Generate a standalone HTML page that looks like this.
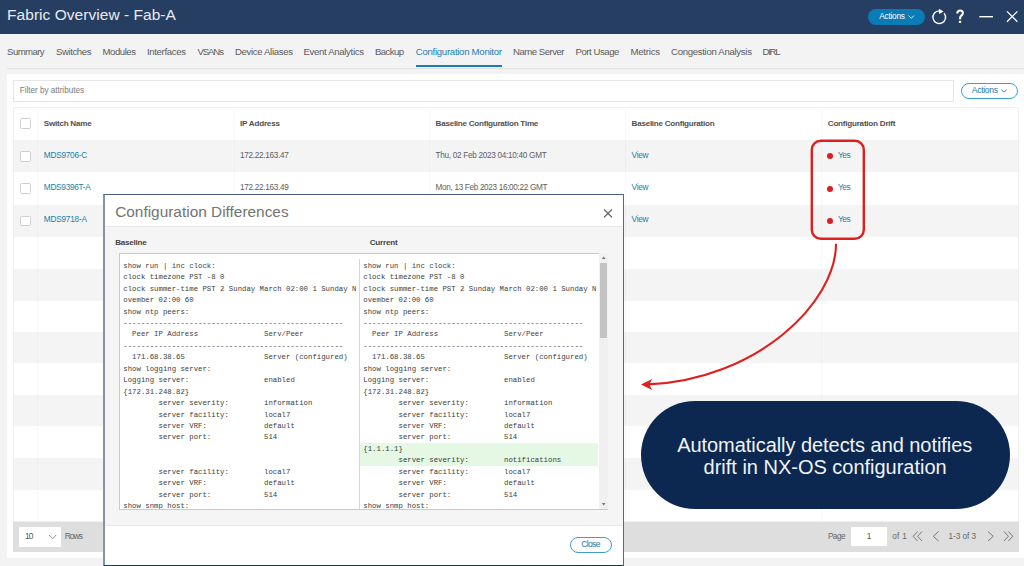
<!DOCTYPE html>
<html><head><meta charset="utf-8"><style>
html,body{margin:0;padding:0;width:1024px;height:566px;overflow:hidden;background:#f3f3f3;}
body{position:relative;font-family:"Liberation Sans", sans-serif;}
.a{position:absolute;}
.t{position:absolute;white-space:pre;}
</style></head><body>
<div class="a" style="left:0px;top:0px;width:1024.00px;height:33.50px;background:#263e62"></div>
<div class="t" style="left:7.05px;top:5.00px;font-size:15.5px;line-height:19px;color:#e6eaf0;letter-spacing:0.040px;">Fabric Overview - Fab-A</div>
<div class="a" style="left:867.75px;top:8.8px;width:57.45px;height:16.00px;background:#0a7bb5;border-radius:8px"></div>
<div class="t" style="left:879.30px;top:11.00px;font-size:8.3px;line-height:10px;color:#ffffff;letter-spacing:-0.254px;">Actions</div>
<svg class="a" style="left:0;top:0" width="1024" height="566" viewBox="0 0 1024 566"><path d="M908.6 15.6 L911.3 18.3 L914 15.6" fill="none" stroke="#fff" stroke-width="0.9"/><path d="M939.3 10.9 A6.3 6.3 0 1 0 944.1 13.2" fill="none" stroke="#fff" stroke-width="1.4"/><path d="M938.9 8.7 L943.5 11.4 L939.1 14.1 Z" fill="#fff"/><path d="M957.3 13.6 C957.3 11.5 958.6 10.5 960.1 10.5 C961.8 10.5 962.9 11.6 962.9 13.1 C962.9 14.7 961.7 15.3 960.9 16 C960.2 16.6 960.1 17.2 960.1 18.4 V19.3" fill="none" stroke="#fff" stroke-width="2.1"/><rect x="958.9" y="20.8" width="2.3" height="2.1" fill="#fff"/><path d="M979.3 16.7 H993" stroke="#fff" stroke-width="1.4"/><path d="M1007 11.4 L1017.4 21.7 M1017.4 11.4 L1007 21.7" stroke="#fff" stroke-width="1.3"/></svg>
<div class="a" style="left:0px;top:33.5px;width:1024.00px;height:40.50px;background:#f3f3f3"></div>
<div class="t" style="left:7.10px;top:46.00px;font-size:9.6px;line-height:12px;color:#5a5a5a;letter-spacing:-0.598px;">Summary</div>
<div class="t" style="left:55.90px;top:46.00px;font-size:9.6px;line-height:12px;color:#5a5a5a;letter-spacing:-0.400px;">Switches</div>
<div class="t" style="left:102.50px;top:46.00px;font-size:9.6px;line-height:12px;color:#5a5a5a;letter-spacing:-0.465px;">Modules</div>
<div class="t" style="left:147.00px;top:46.00px;font-size:9.6px;line-height:12px;color:#5a5a5a;letter-spacing:-0.349px;">Interfaces</div>
<div class="t" style="left:197.50px;top:46.00px;font-size:9.6px;line-height:12px;color:#5a5a5a;letter-spacing:-1.115px;">VSANs</div>
<div class="t" style="left:235.00px;top:46.00px;font-size:9.6px;line-height:12px;color:#5a5a5a;letter-spacing:-0.342px;">Device Aliases</div>
<div class="t" style="left:303.50px;top:46.00px;font-size:9.6px;line-height:12px;color:#5a5a5a;letter-spacing:-0.328px;">Event Analytics</div>
<div class="t" style="left:375.00px;top:46.00px;font-size:9.6px;line-height:12px;color:#5a5a5a;letter-spacing:-0.603px;">Backup</div>
<div class="t" style="left:415.80px;top:46.00px;font-size:9.6px;line-height:12px;color:#1b80b3;letter-spacing:-0.279px;">Configuration Monitor</div>
<div class="t" style="left:513.00px;top:46.00px;font-size:9.6px;line-height:12px;color:#5a5a5a;letter-spacing:-0.504px;">Name Server</div>
<div class="t" style="left:575.50px;top:46.00px;font-size:9.6px;line-height:12px;color:#5a5a5a;letter-spacing:-0.450px;">Port Usage</div>
<div class="t" style="left:630.50px;top:46.00px;font-size:9.6px;line-height:12px;color:#5a5a5a;letter-spacing:-0.235px;">Metrics</div>
<div class="t" style="left:671.00px;top:46.00px;font-size:9.6px;line-height:12px;color:#5a5a5a;letter-spacing:-0.303px;">Congestion Analysis</div>
<div class="t" style="left:762.50px;top:46.00px;font-size:9.6px;line-height:12px;color:#5a5a5a;letter-spacing:-1.296px;">DIRL</div>
<div class="a" style="left:415.5px;top:65.2px;width:86.80px;height:2.00px;background:#1b7db5"></div>
<div class="a" style="left:7px;top:68px;width:1017.00px;height:1.00px;background:#e2e2e2"></div>
<div class="a" style="left:7px;top:74px;width:1017.00px;height:484.00px;background:#ffffff"></div>
<div class="a" style="left:13px;top:80px;width:941.00px;height:22.00px;border:1px solid #e6e6e6;box-sizing:border-box;background:#fff"></div>
<div class="t" style="left:19.70px;top:86.00px;font-size:8.2px;line-height:10px;color:#7a7a7a;letter-spacing:-0.039px;">Filter by attributes</div>
<div class="a" style="left:961px;top:83.3px;width:56.80px;height:15.30px;border:1px solid #3d9fcf;border-radius:8px;box-sizing:border-box"></div>
<div class="t" style="left:971.80px;top:85.00px;font-size:8.6px;line-height:10px;color:#1b78ad;letter-spacing:-0.335px;">Actions</div>
<svg class="a" style="left:0;top:0" width="1024" height="566"><path d="M1001.3 89.6 L1004 92.2 L1006.7 89.6" fill="none" stroke="#1b78ad" stroke-width="0.9"/></svg>
<div class="a" style="left:13px;top:107px;width:1006.00px;height:415.00px;border:1px solid #efefef;box-sizing:border-box;background:#fff"></div>
<div class="a" style="left:14px;top:140px;width:1004.00px;height:32.00px;background:#f4f4f4"></div>
<div class="a" style="left:14px;top:204.6px;width:1004.00px;height:32.30px;background:#f4f4f4"></div>
<div class="a" style="left:14px;top:268.9px;width:1004.00px;height:31.80px;background:#f4f4f4"></div>
<div class="a" style="left:14px;top:332px;width:1004.00px;height:31.30px;background:#f4f4f4"></div>
<div class="a" style="left:14px;top:394.8px;width:1004.00px;height:31.70px;background:#f4f4f4"></div>
<div class="a" style="left:14px;top:458.2px;width:1004.00px;height:31.90px;background:#f4f4f4"></div>
<div class="a" style="left:37px;top:108.5px;width:1.00px;height:413.40px;background:rgba(0,0,0,0.022)"></div>
<div class="a" style="left:234px;top:108.5px;width:1.00px;height:413.40px;background:rgba(0,0,0,0.022)"></div>
<div class="a" style="left:429px;top:108.5px;width:1.00px;height:413.40px;background:rgba(0,0,0,0.022)"></div>
<div class="a" style="left:625px;top:108.5px;width:1.00px;height:413.40px;background:rgba(0,0,0,0.022)"></div>
<div class="a" style="left:821px;top:108.5px;width:1.00px;height:413.40px;background:rgba(0,0,0,0.022)"></div>
<div class="a" style="left:20.2px;top:117.8px;width:11.20px;height:10.80px;border:1px solid #cfcfcf;border-radius:1.5px;box-sizing:border-box;background:#fff"></div>
<div class="a" style="left:20.2px;top:151.0px;width:11.20px;height:10.80px;border:1px solid #cfcfcf;border-radius:1.5px;box-sizing:border-box;background:#fff"></div>
<div class="a" style="left:20.2px;top:183.4px;width:11.20px;height:10.80px;border:1px solid #cfcfcf;border-radius:1.5px;box-sizing:border-box;background:#fff"></div>
<div class="a" style="left:20.2px;top:215.6px;width:11.20px;height:10.80px;border:1px solid #cfcfcf;border-radius:1.5px;box-sizing:border-box;background:#fff"></div>
<div class="t" style="left:43.80px;top:119.00px;font-size:8.1px;line-height:10px;color:#505050;font-weight:bold;letter-spacing:-0.252px;">Switch Name</div>
<div class="t" style="left:240.00px;top:119.00px;font-size:8.1px;line-height:10px;color:#505050;font-weight:bold;letter-spacing:-0.209px;">IP Address</div>
<div class="t" style="left:435.60px;top:119.00px;font-size:8.1px;line-height:10px;color:#505050;font-weight:bold;letter-spacing:-0.264px;">Baseline Configuration Time</div>
<div class="t" style="left:631.60px;top:119.00px;font-size:8.1px;line-height:10px;color:#505050;font-weight:bold;letter-spacing:-0.264px;">Baseline Configuration</div>
<div class="t" style="left:827.80px;top:119.00px;font-size:8.1px;line-height:10px;color:#505050;font-weight:bold;letter-spacing:-0.237px;">Configuration Drift</div>
<div class="t" style="left:43.80px;top:150.00px;font-size:8.3px;line-height:10px;color:#217fa4;letter-spacing:-0.281px;">MDS9706-C</div>
<div class="t" style="left:240.00px;top:151.00px;font-size:8.2px;line-height:10px;color:#606060;letter-spacing:-0.287px;">172.22.163.47</div>
<div class="t" style="left:435.60px;top:151.00px;font-size:8.2px;line-height:10px;color:#606060;letter-spacing:-0.290px;">Thu, 02 Feb 2023 04:10:40 GMT</div>
<div class="t" style="left:631.60px;top:150.00px;font-size:8.3px;line-height:10px;color:#217fa4;letter-spacing:-0.348px;">View</div>
<div class="a" style="left:827.1px;top:153.40px;width:5.8px;height:5.8px;border-radius:50%;background:#e01e1e"></div>
<div class="t" style="left:838.00px;top:150.00px;font-size:8.3px;line-height:10px;color:#217fa4;letter-spacing:-0.415px;">Yes</div>
<div class="t" style="left:43.80px;top:182.00px;font-size:8.3px;line-height:10px;color:#217fa4;letter-spacing:-0.305px;">MDS9396T-A</div>
<div class="t" style="left:240.00px;top:183.00px;font-size:8.2px;line-height:10px;color:#606060;letter-spacing:-0.287px;">172.22.163.49</div>
<div class="t" style="left:435.60px;top:183.00px;font-size:8.2px;line-height:10px;color:#606060;letter-spacing:-0.330px;">Mon, 13 Feb 2023 16:00:22 GMT</div>
<div class="t" style="left:631.60px;top:182.00px;font-size:8.3px;line-height:10px;color:#217fa4;letter-spacing:-0.348px;">View</div>
<div class="a" style="left:827.1px;top:185.90px;width:5.8px;height:5.8px;border-radius:50%;background:#e01e1e"></div>
<div class="t" style="left:838.00px;top:182.00px;font-size:8.3px;line-height:10px;color:#217fa4;letter-spacing:-0.415px;">Yes</div>
<div class="t" style="left:43.80px;top:214.00px;font-size:8.3px;line-height:10px;color:#217fa4;letter-spacing:-0.254px;">MDS9718-A</div>
<div class="t" style="left:631.60px;top:214.00px;font-size:8.3px;line-height:10px;color:#217fa4;letter-spacing:-0.348px;">View</div>
<div class="a" style="left:827.1px;top:218.10px;width:5.8px;height:5.8px;border-radius:50%;background:#e01e1e"></div>
<div class="t" style="left:838.00px;top:214.00px;font-size:8.3px;line-height:10px;color:#217fa4;letter-spacing:-0.415px;">Yes</div>
<div class="a" style="left:13px;top:522px;width:1006.00px;height:30.40px;background:#dedede"></div>
<div class="a" style="left:19px;top:526.9px;width:42.30px;height:20.10px;background:#fff"></div>
<div class="t" style="left:25.10px;top:531.00px;font-size:8.5px;line-height:10px;color:#555;letter-spacing:-1.135px;">10</div>
<svg class="a" style="left:0;top:0" width="1024" height="566"><path d="M49 535 L52.6 538.6 L56.2 535" fill="none" stroke="#888" stroke-width="0.9"/></svg>
<div class="t" style="left:64.70px;top:531.00px;font-size:8.5px;line-height:10px;color:#666;letter-spacing:-0.983px;">Rows</div>
<div class="t" style="left:827.90px;top:532.00px;font-size:8.2px;line-height:10px;color:#666;letter-spacing:-0.482px;">Page</div>
<div class="a" style="left:850.8px;top:526.7px;width:35.90px;height:19.80px;background:#fff"></div>
<div class="t" style="left:866.80px;top:532.00px;font-size:8.2px;line-height:10px;color:#555;">1</div>
<div class="t" style="left:892.20px;top:532.00px;font-size:8.2px;line-height:10px;color:#666;letter-spacing:0.302px;">of 1</div>
<div class="t" style="left:948.60px;top:532.00px;font-size:8.2px;line-height:10px;color:#666;letter-spacing:-0.028px;">1-3 of 3</div>
<svg class="a" style="left:0;top:0" width="1024" height="566" fill="none" stroke="#777" stroke-width="1"><path d="M917.6 531.5 L913.2 536.3 L917.6 541 M922 531.5 L917.6 536.3 L922 541"/><path d="M938.5 531.5 L933.3 536.3 L938.5 541"/><path d="M988 531.5 L993.2 536.3 L988 541"/><path d="M1004 531.5 L1008.4 536.3 L1004 541 M1008.4 531.5 L1012.8 536.3 L1008.4 541"/></svg>
<svg class="a" style="left:0;top:0" width="1024" height="566"><rect x="811.8" y="140.8" width="52" height="98" rx="9" fill="none" stroke="#e01e1e" stroke-width="2.4"/><path d="M836 243.7 C836 303 757 379.5 648 384.4" fill="none" stroke="#e01e1e" stroke-width="2.1"/><path d="M641 384.6 L652.2 378.9 L649.2 384.5 L652.2 390.1 Z" fill="#e01e1e"/></svg>
<div class="a" style="left:640.5px;top:401px;width:369.20px;height:107.60px;background:#0d2850;border-radius:54px"></div>
<div class="t" style="left:677.20px;top:433.00px;font-size:20px;line-height:24px;color:#f0f3f7;letter-spacing:-0.052px;">Automatically detects and notifies</div>
<div class="t" style="left:703.60px;top:455.00px;font-size:20px;line-height:24px;color:#f0f3f7;letter-spacing:-0.015px;">drift in NX-OS configuration</div>
<div class="a" style="left:103px;top:194px;width:521.00px;height:372.00px;background:#fff;border-top:1px solid #4a5e82;border-right:1px solid #53688c;border-left:2px solid #8193ae;border-bottom:1px solid #1d3358;box-sizing:border-box"></div>
<div class="a" style="left:105px;top:226px;width:517.80px;height:1.00px;background:#e8e8e8"></div>
<div class="a" style="left:105px;top:227px;width:517.80px;height:298.00px;background:#f5f5f5"></div>
<div class="a" style="left:105px;top:525px;width:517.80px;height:1.00px;background:#e6e6e6"></div>
<div class="t" style="left:115.20px;top:203.00px;font-size:15.4px;line-height:18px;color:#737373;letter-spacing:0.001px;">Configuration Differences</div>
<svg class="a" style="left:0;top:0" width="1024" height="566"><path d="M604 209.3 L612 217.3 M612 209.3 L604 217.3" stroke="#555" stroke-width="1.2"/></svg>
<div class="t" style="left:115.20px;top:238.00px;font-size:8.1px;line-height:10px;color:#444444;font-weight:bold;letter-spacing:-0.262px;">Baseline</div>
<div class="t" style="left:369.70px;top:238.00px;font-size:8.1px;line-height:10px;color:#444444;font-weight:bold;letter-spacing:-0.207px;">Current</div>
<div class="a" style="left:119.3px;top:253.4px;width:479.70px;height:256.60px;background:#fff;border:1px solid #c9c9c9;border-right:none;box-sizing:border-box"></div>
<div class="a" style="left:599px;top:253.4px;width:9.40px;height:256.60px;background:#f0f0f0;border-bottom:1px solid #c9c9c9;box-sizing:border-box"></div>
<div class="a" style="left:600.3px;top:262.8px;width:6.70px;height:75.20px;background:#c3c3c3"></div>
<svg class="a" style="left:0;top:0" width="1024" height="566" fill="#777"><path d="M601.8 259 L605.6 259 L603.7 256.6Z"/><path d="M601.8 503 L605.6 503 L603.7 505.4Z"/></svg>
<div class="a" style="left:359.1px;top:259.3px;width:1.00px;height:249.70px;background:#d6d6d6"></div>
<div class="a" style="left:360.4px;top:443.3px;width:237.40px;height:22.70px;background:#e4f8e4"></div>
<div class="a" style="left:120.3px;top:254px;width:478px;height:255px;overflow:hidden">
<div class="t" style="left:3.00px;top:7.00px;font-size:7.33px;line-height:11px;color:#404040;font-family:'Liberation Mono', monospace;white-space:pre">show run | inc clock:</div>
<div class="t" style="left:243.00px;top:7.00px;font-size:7.33px;line-height:11px;color:#404040;font-family:'Liberation Mono', monospace;white-space:pre">show run | inc clock:</div>
<div class="t" style="left:3.00px;top:18.00px;font-size:7.33px;line-height:11px;color:#404040;font-family:'Liberation Mono', monospace;white-space:pre">clock timezone PST -8 0</div>
<div class="t" style="left:243.00px;top:18.00px;font-size:7.33px;line-height:11px;color:#404040;font-family:'Liberation Mono', monospace;white-space:pre">clock timezone PST -8 0</div>
<div class="t" style="left:3.00px;top:30.00px;font-size:7.33px;line-height:11px;color:#404040;font-family:'Liberation Mono', monospace;white-space:pre">clock summer-time PST 2 Sunday March 02:00 1 Sunday N</div>
<div class="t" style="left:243.00px;top:30.00px;font-size:7.33px;line-height:11px;color:#404040;font-family:'Liberation Mono', monospace;white-space:pre">clock summer-time PST 2 Sunday March 02:00 1 Sunday N</div>
<div class="t" style="left:3.00px;top:41.00px;font-size:7.33px;line-height:11px;color:#404040;font-family:'Liberation Mono', monospace;white-space:pre">ovember 02:00 60</div>
<div class="t" style="left:243.00px;top:41.00px;font-size:7.33px;line-height:11px;color:#404040;font-family:'Liberation Mono', monospace;white-space:pre">ovember 02:00 60</div>
<div class="t" style="left:3.00px;top:53.00px;font-size:7.33px;line-height:11px;color:#404040;font-family:'Liberation Mono', monospace;white-space:pre">show ntp peers:</div>
<div class="t" style="left:243.00px;top:53.00px;font-size:7.33px;line-height:11px;color:#404040;font-family:'Liberation Mono', monospace;white-space:pre">show ntp peers:</div>
<div class="t" style="left:3.00px;top:64.00px;font-size:7.33px;line-height:11px;color:#404040;font-family:'Liberation Mono', monospace;white-space:pre">--------------------------------------------------</div>
<div class="t" style="left:243.00px;top:64.00px;font-size:7.33px;line-height:11px;color:#404040;font-family:'Liberation Mono', monospace;white-space:pre">--------------------------------------------------</div>
<div class="t" style="left:3.00px;top:75.00px;font-size:7.33px;line-height:11px;color:#404040;font-family:'Liberation Mono', monospace;white-space:pre">  Peer IP Address               Serv/Peer</div>
<div class="t" style="left:243.00px;top:75.00px;font-size:7.33px;line-height:11px;color:#404040;font-family:'Liberation Mono', monospace;white-space:pre">  Peer IP Address               Serv/Peer</div>
<div class="t" style="left:3.00px;top:87.00px;font-size:7.33px;line-height:11px;color:#404040;font-family:'Liberation Mono', monospace;white-space:pre">--------------------------------------------------</div>
<div class="t" style="left:243.00px;top:87.00px;font-size:7.33px;line-height:11px;color:#404040;font-family:'Liberation Mono', monospace;white-space:pre">--------------------------------------------------</div>
<div class="t" style="left:3.00px;top:98.00px;font-size:7.33px;line-height:11px;color:#404040;font-family:'Liberation Mono', monospace;white-space:pre">  171.68.38.65                  Server (configured)</div>
<div class="t" style="left:243.00px;top:98.00px;font-size:7.33px;line-height:11px;color:#404040;font-family:'Liberation Mono', monospace;white-space:pre">  171.68.38.65                  Server (configured)</div>
<div class="t" style="left:3.00px;top:110.00px;font-size:7.33px;line-height:11px;color:#404040;font-family:'Liberation Mono', monospace;white-space:pre">show logging server:</div>
<div class="t" style="left:243.00px;top:110.00px;font-size:7.33px;line-height:11px;color:#404040;font-family:'Liberation Mono', monospace;white-space:pre">show logging server:</div>
<div class="t" style="left:3.00px;top:121.00px;font-size:7.33px;line-height:11px;color:#404040;font-family:'Liberation Mono', monospace;white-space:pre">Logging server:                 enabled</div>
<div class="t" style="left:243.00px;top:121.00px;font-size:7.33px;line-height:11px;color:#404040;font-family:'Liberation Mono', monospace;white-space:pre">Logging server:                 enabled</div>
<div class="t" style="left:3.00px;top:133.00px;font-size:7.33px;line-height:11px;color:#404040;font-family:'Liberation Mono', monospace;white-space:pre">{172.31.248.82}</div>
<div class="t" style="left:243.00px;top:133.00px;font-size:7.33px;line-height:11px;color:#404040;font-family:'Liberation Mono', monospace;white-space:pre">{172.31.248.82}</div>
<div class="t" style="left:3.00px;top:144.00px;font-size:7.33px;line-height:11px;color:#404040;font-family:'Liberation Mono', monospace;white-space:pre">        server severity:        information</div>
<div class="t" style="left:243.00px;top:144.00px;font-size:7.33px;line-height:11px;color:#404040;font-family:'Liberation Mono', monospace;white-space:pre">        server severity:        information</div>
<div class="t" style="left:3.00px;top:156.00px;font-size:7.33px;line-height:11px;color:#404040;font-family:'Liberation Mono', monospace;white-space:pre">        server facility:        local7</div>
<div class="t" style="left:243.00px;top:156.00px;font-size:7.33px;line-height:11px;color:#404040;font-family:'Liberation Mono', monospace;white-space:pre">        server facility:        local7</div>
<div class="t" style="left:3.00px;top:167.00px;font-size:7.33px;line-height:11px;color:#404040;font-family:'Liberation Mono', monospace;white-space:pre">        server VRF:             default</div>
<div class="t" style="left:243.00px;top:167.00px;font-size:7.33px;line-height:11px;color:#404040;font-family:'Liberation Mono', monospace;white-space:pre">        server VRF:             default</div>
<div class="t" style="left:3.00px;top:178.00px;font-size:7.33px;line-height:11px;color:#404040;font-family:'Liberation Mono', monospace;white-space:pre">        server port:            514</div>
<div class="t" style="left:243.00px;top:178.00px;font-size:7.33px;line-height:11px;color:#404040;font-family:'Liberation Mono', monospace;white-space:pre">        server port:            514</div>
<div class="t" style="left:243.00px;top:190.00px;font-size:7.33px;line-height:11px;color:#404040;font-family:'Liberation Mono', monospace;white-space:pre">{1.1.1.1}</div>
<div class="t" style="left:243.00px;top:201.00px;font-size:7.33px;line-height:11px;color:#404040;font-family:'Liberation Mono', monospace;white-space:pre">        server severity:        notifications</div>
<div class="t" style="left:3.00px;top:213.00px;font-size:7.33px;line-height:11px;color:#404040;font-family:'Liberation Mono', monospace;white-space:pre">        server facility:        local7</div>
<div class="t" style="left:243.00px;top:213.00px;font-size:7.33px;line-height:11px;color:#404040;font-family:'Liberation Mono', monospace;white-space:pre">        server facility:        local7</div>
<div class="t" style="left:3.00px;top:224.00px;font-size:7.33px;line-height:11px;color:#404040;font-family:'Liberation Mono', monospace;white-space:pre">        server VRF:             default</div>
<div class="t" style="left:243.00px;top:224.00px;font-size:7.33px;line-height:11px;color:#404040;font-family:'Liberation Mono', monospace;white-space:pre">        server VRF:             default</div>
<div class="t" style="left:3.00px;top:236.00px;font-size:7.33px;line-height:11px;color:#404040;font-family:'Liberation Mono', monospace;white-space:pre">        server port:            514</div>
<div class="t" style="left:243.00px;top:236.00px;font-size:7.33px;line-height:11px;color:#404040;font-family:'Liberation Mono', monospace;white-space:pre">        server port:            514</div>
<div class="t" style="left:3.00px;top:247.00px;font-size:7.33px;line-height:11px;color:#404040;font-family:'Liberation Mono', monospace;white-space:pre">show snmp host:</div>
<div class="t" style="left:243.00px;top:247.00px;font-size:7.33px;line-height:11px;color:#404040;font-family:'Liberation Mono', monospace;white-space:pre">show snmp host:</div>
</div>
<div class="a" style="left:570.1px;top:537.4px;width:41.60px;height:15.20px;border:1px solid #3d9fcf;border-radius:8px;box-sizing:border-box;background:#fff"></div>
<div class="t" style="left:581.30px;top:539.00px;font-size:8.6px;line-height:10px;color:#1b78ad;letter-spacing:-0.693px;">Close</div>
</body></html>
